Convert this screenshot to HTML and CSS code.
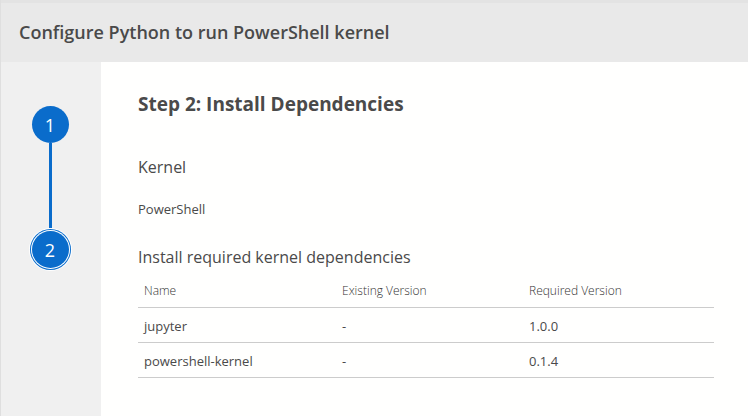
FILE: index.html
```html
<!DOCTYPE html>
<html lang="en">
<head>
    <meta charset="UTF-8">
    <meta name="viewport" content="width=device-width, initial-scale=1.0">
    <title>Configure Python to run PowerShell kernel</title>
    <link rel="stylesheet" href="styles.css">
</head>
<body>
    <div class="dialog">
        <header class="dialog-header">
            <h1>Configure Python to run PowerShell kernel</h1>
        </header>
        <div class="dialog-body">
            <nav class="steps" aria-label="Steps">
                <button class="step" type="button">1</button>
                <div class="step-line"></div>
                <button class="step active" type="button" aria-current="step">2</button>
            </nav>
            <main class="content">
                <h2>Step 2: Install Dependencies</h2>
                <h3>Kernel</h3>
                <p>PowerShell</p>
                <h3>Install required kernel dependencies</h3>
                <table>
                    <thead>
                        <tr>
                            <th class="col-name">Name</th>
                            <th class="col-existing">Existing Version</th>
                            <th>Required Version</th>
                        </tr>
                    </thead>
                    <tbody>
                        <tr>
                            <td>jupyter</td>
                            <td>-</td>
                            <td>1.0.0</td>
                        </tr>
                        <tr>
                            <td>powershell-kernel</td>
                            <td>-</td>
                            <td>0.1.4</td>
                        </tr>
                    </tbody>
                </table>
            </main>
        </div>
    </div>
</body>
</html>
```

FILE: styles.css
```css
* {
    box-sizing: border-box;
}
body {
    margin: 0;
    font-family: "Segoe UI", "Open Sans", "Noto Sans", sans-serif;
    font-size: 13px;
    color: #4a4a4a;
    background: #fffffe;
}
h1, h2, h3, p {
    margin: 0;
}
.dialog {
    display: flex;
    flex-direction: column;
    min-height: 100vh;
    border-left: 1px solid #dfdfdf;
}
.dialog-header {
    padding: 17px 18px;
    background: #e9e9e9;
    border-top: 3px solid #e3e3e3;
}
.dialog-header h1 {
    font-size: 18px;
    font-weight: 600;
    line-height: 25px;
}
.dialog-body {
    display: flex;
    flex: 1;
}
.steps {
    display: flex;
    flex-direction: column;
    align-items: center;
    flex: 0 0 100px;
    padding: 44px 2px 0 0;
    background: #f0f0f0;
}
.step {
    width: 37px;
    height: 37px;
    padding: 0;
    border: none;
    border-radius: 50%;
    background: #0a6ccb;
    color: #fff;
    font-family: inherit;
    font-size: 18px;
    cursor: pointer;
}
.step-line {
    width: 3px;
    height: 85px;
    background: #0a6ccb;
}
.step.active {
    margin-top: 3px;
    box-shadow: 0 0 0 1px #fff, 0 0 0 2px #0a6ccb, 0 0 0 3px #fff;
}
.content {
    flex: 1;
    padding: 28px 34px 28px 37px;
}
h2 {
    margin-bottom: 36px;
    font-size: 19px;
    font-weight: 700;
    line-height: 28px;
}
h3 {
    font-size: 16px;
    font-weight: 400;
    line-height: 26px;
}
p {
    margin: 20px 0 26px;
    line-height: 18px;
}
table {
    width: 100%;
    border-collapse: collapse;
    table-layout: fixed;
}
th, td {
    height: 35px;
    padding: 2px 6px 0;
    border-bottom: 1px solid #ccc;
    text-align: left;
}
th {
    height: 37px;
    padding-top: 4px;
    color: #333;
    font-size: 12px;
    font-weight: 300;
}
.col-name {
    width: 198px;
}
.col-existing {
    width: 187px;
}
```
